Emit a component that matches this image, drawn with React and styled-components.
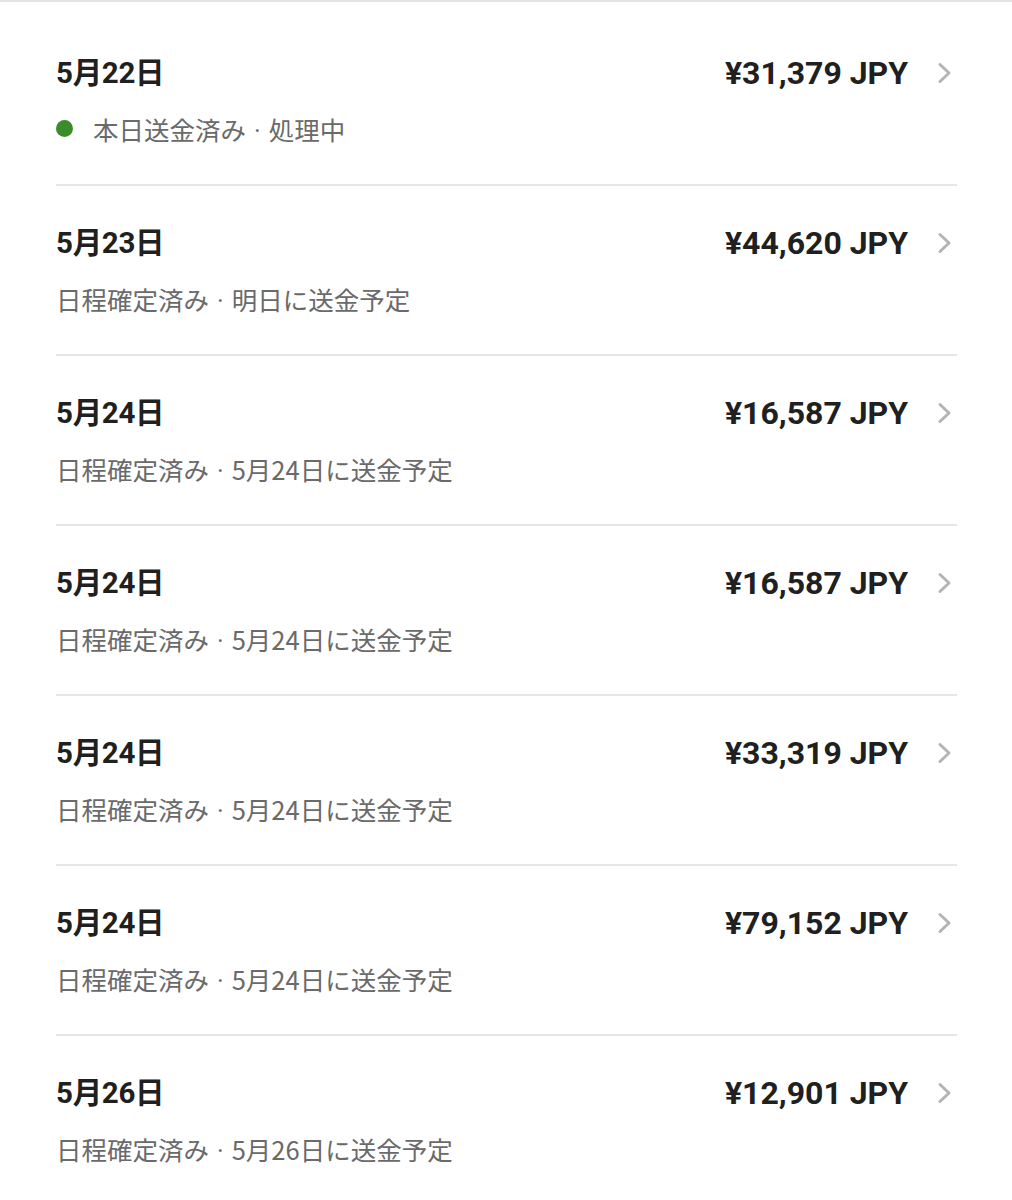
import React from "react";
import styled, { createGlobalStyle } from "styled-components";

const GlobalStyle = createGlobalStyle`
  body {
    margin: 0;
    background: #ffffff;
    font-family: Roboto, "Noto Sans CJK JP", sans-serif;
  }
`;

const Page = styled.div`
  border-top: 2px solid #e4e4e4;
  padding: 14px 55px 0 56px;
`;

const List = styled.ul`
  list-style: none;
  margin: 0;
  padding: 0;
`;

const Row = styled.li`
  padding: 39px 0 40px;
  border-bottom: ${(p) => (p.$last ? "none" : "2px solid #e6e6e6")};
`;

const TopLine = styled.div`
  display: flex;
  align-items: center;
  justify-content: space-between;
  height: 36px;
`;

const DateLabel = styled.div`
  font-size: 29.5px;
  line-height: 30px;
  font-weight: 700;
  color: #202020;
  letter-spacing: -0.3px;
`;

const AmountWrap = styled.div`
  display: flex;
  align-items: center;
  gap: 29px;
  padding-right: 5px;
`;

const Amount = styled.div`
  font-size: 32px;
  line-height: 36px;
  font-weight: 700;
  color: #202020;
`;

const Status = styled.div`
  display: flex;
  align-items: center;
  gap: 20px;
  margin-top: 21px;
  height: 32px;
  font-family: "Noto Sans CJK JP", sans-serif;
  font-size: 25.5px;
  color: #6a6a6a;
`;

const Dot = styled.span`
  width: 17px;
  height: 17px;
  border-radius: 50%;
  background: #3d8c2c;
`;

const Sep = styled.span`
  font-family: Roboto, sans-serif;
  margin: 0 8px;
`;

const Chevron = () => (
  <svg width="15" height="22" viewBox="0 0 15 22">
    <polyline
      points="3,2.5 12,11 3,19.5"
      fill="none"
      stroke="#b4b4b4"
      strokeWidth="3"
      strokeLinecap="round"
      strokeLinejoin="round"
    />
  </svg>
);

const payouts = [
  { date: "5月22日", amount: "¥31,379 JPY", state: "本日送金済み", note: "処理中", live: true },
  { date: "5月23日", amount: "¥44,620 JPY", state: "日程確定済み", note: "明日に送金予定" },
  { date: "5月24日", amount: "¥16,587 JPY", state: "日程確定済み", note: "5月24日に送金予定" },
  { date: "5月24日", amount: "¥16,587 JPY", state: "日程確定済み", note: "5月24日に送金予定" },
  { date: "5月24日", amount: "¥33,319 JPY", state: "日程確定済み", note: "5月24日に送金予定" },
  { date: "5月24日", amount: "¥79,152 JPY", state: "日程確定済み", note: "5月24日に送金予定" },
  { date: "5月26日", amount: "¥12,901 JPY", state: "日程確定済み", note: "5月26日に送金予定" },
];

const App = () => (
  <>
    <GlobalStyle />
    <Page>
      <List>
        {payouts.map((p, i) => (
          <Row key={i} $last={i === payouts.length - 1}>
            <TopLine>
              <DateLabel>{p.date}</DateLabel>
              <AmountWrap>
                <Amount>{p.amount}</Amount>
                <Chevron />
              </AmountWrap>
            </TopLine>
            <Status>
              {p.live && <Dot />}
              <span>
                {p.state}
                <Sep>·</Sep>
                {p.note}
              </span>
            </Status>
          </Row>
        ))}
      </List>
    </Page>
  </>
);

export default App;
